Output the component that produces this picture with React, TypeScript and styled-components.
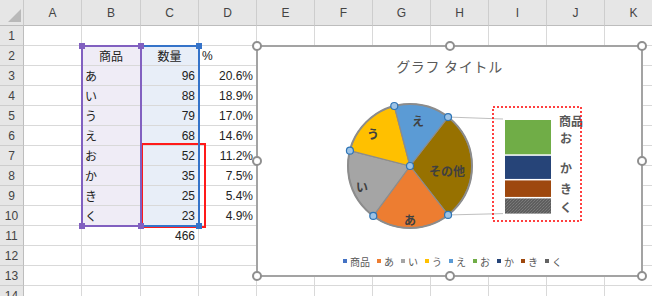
import styled, { createGlobalStyle } from 'styled-components';

const GlobalStyle = createGlobalStyle`
  *, *::before, *::after {
    box-sizing: border-box;
  }
  html, body {
    margin: 0;
    padding: 0;
    background: #ffffff;
    overflow: hidden;
  }
  body {
    font-family: "Liberation Sans", "Noto Sans CJK JP", sans-serif;
  }
`;

const COLS = ['A', 'B', 'C', 'D', 'E', 'F', 'G', 'H', 'I', 'J', 'K'];
const ROWS = 14;

const items = [
  { name: 'あ', qty: 96, color: '#ed7d31' },
  { name: 'い', qty: 88, color: '#a5a5a5' },
  { name: 'う', qty: 79, color: '#ffc000' },
  { name: 'え', qty: 68, color: '#5b9bd5' },
  { name: 'お', qty: 52, color: '#70ad47' },
  { name: 'か', qty: 35, color: '#264478' },
  { name: 'き', qty: 25, color: '#9e480e' },
  { name: 'く', qty: 23, color: '#636363' },
];
const total = items.reduce((s, i) => s + i.qty, 0);

type Align = 'left' | 'center' | 'right';
type CellData = { v: string; align?: Align };

// セルの中身
const cells: Record<string, CellData> = {
  B2: { v: '商品', align: 'center' },
  C2: { v: '数量', align: 'center' },
  D2: { v: '%' },
  C11: { v: String(total), align: 'right' },
};
items.forEach((it, i) => {
  const r = i + 3;
  cells['B' + r] = { v: it.name };
  cells['C' + r] = { v: String(it.qty), align: 'right' };
  cells['D' + r] = { v: ((it.qty / total) * 100).toFixed(1) + '%', align: 'right' };
});

const tintFor = (col: string, row: number) => {
  if (row < 2 || row > 10) return undefined;
  if (col === 'B') return '#efecf6';
  if (col === 'C') return '#e8eef8';
  return undefined;
};

const Sheet = styled.div`
  width: 652px;
  height: 296px;
  overflow: hidden;
  display: grid;
  grid-template-columns: 24px 58px 59px repeat(9, 58px);
  grid-template-rows: 26px repeat(14, 20px);
  font-size: 12px;
  color: #222;
`;

const Corner = styled.div`
  grid-column: 1;
  grid-row: 1;
  background: #e6e6e6;
  border-right: 1px solid #c9c9c9;
  border-bottom: 1px solid #bdbdbd;
  display: flex;
  align-items: flex-end;
  justify-content: flex-end;
  padding: 0 2px 3px 0;

  &::after {
    content: '';
    width: 0;
    height: 0;
    border-left: 13px solid transparent;
    border-bottom: 13px solid #b9b9b9;
  }
`;

const ColHead = styled.div<{ $c: number }>`
  grid-column: ${p => p.$c};
  grid-row: 1;
  background: #e6e6e6;
  border-right: 1px solid #cdcdcd;
  border-bottom: 1px solid #bdbdbd;
  display: flex;
  align-items: center;
  justify-content: center;
  color: #444;
  font-size: 12px;
`;

const RowHead = styled.div<{ $r: number }>`
  grid-column: 1;
  grid-row: ${p => p.$r};
  background: #e6e6e6;
  border-right: 1px solid #bdbdbd;
  border-bottom: 1px solid #cdcdcd;
  display: flex;
  align-items: center;
  justify-content: center;
  color: #444;
  font-size: 12px;
`;

const Cell = styled.div<{ $c: number; $r: number; $align: Align; $tint?: string }>`
  grid-column: ${p => p.$c};
  grid-row: ${p => p.$r};
  border-right: 1px solid #d9d9d9;
  border-bottom: 1px solid #d9d9d9;
  padding: 0 3px;
  display: flex;
  align-items: center;
  justify-content: ${p => (p.$align === 'right' ? 'flex-end' : p.$align === 'center' ? 'center' : 'flex-start')};
  background: ${p => p.$tint ?? 'transparent'};
  white-space: nowrap;
  color: #222;
`;

const Range = styled.div<{ $col: number; $rows: string; $color: string }>`
  grid-column: ${p => p.$col};
  grid-row: ${p => p.$rows};
  margin: -1px;
  border: 2px solid ${p => p.$color};
  position: relative;
  pointer-events: none;
`;

const RangeHandle = styled.span<{ $color: string; $x: 'l' | 'r'; $y: 't' | 'b' }>`
  position: absolute;
  width: 6px;
  height: 6px;
  background: ${p => p.$color};
  ${p => (p.$x === 'l' ? 'left: -4px;' : 'right: -4px;')}
  ${p => (p.$y === 't' ? 'top: -4px;' : 'bottom: -4px;')}
`;

const Marker = styled.div`
  grid-column: 4;
  grid-row: 8 / 12;
  margin: -3px -7px -2px 0;
  border: 2px solid #ff1a1a;
  pointer-events: none;
`;

const Chart = styled.div`
  grid-column: 6 / 13;
  grid-row: 3 / 16;
  align-self: start;
  justify-self: start;
  margin: -1px 0 0 -1px;
  width: 387px;
  height: 232px;
  border: 2px solid #a3a3a3;
  background: #ffffff;
  position: relative;
  display: flex;
  flex-direction: column;
`;

const HandleLayer = styled.div`
  position: absolute;
  inset: -1px;
  pointer-events: none;
`;

const ChartHandle = styled.span<{ $x: number; $y: number }>`
  position: absolute;
  left: calc(${p => p.$x}% - 5px);
  top: calc(${p => p.$y}% - 5px);
  width: 10px;
  height: 10px;
  border-radius: 50%;
  border: 2px solid #8f8f8f;
  background: #ffffff;
`;

const Title = styled.div`
  height: 34px;
  padding-top: 10px;
  line-height: 18px;
  text-align: center;
  font-family: "Noto Sans CJK JP", sans-serif;
  font-size: 14px;
  letter-spacing: 0.7px;
  color: #595959;
`;

const Plot = styled.svg`
  display: block;
  width: 383px;
  height: 168px;
`;

const SliceLabel = styled.text`
  font-family: "Noto Sans CJK JP", sans-serif;
  font-size: 12px;
  font-weight: 700;
  fill: #404040;
`;

const BarLabel = styled.text`
  font-family: "Noto Sans CJK JP", sans-serif;
  font-size: 12px;
  font-weight: 700;
  fill: #595959;
`;

const Legend = styled.div`
  margin-top: 2px;
  height: 20px;
  padding-left: 6px;
  display: flex;
  align-items: center;
  justify-content: center;
  gap: 7px;
  font-family: "Noto Sans CJK JP", sans-serif;
  font-size: 10px;
  color: #595959;
`;

const LegendItem = styled.span`
  display: flex;
  align-items: center;
  gap: 3px;
`;

const Swatch = styled.span<{ $color: string }>`
  width: 4px;
  height: 4px;
  background: ${p => p.$color};
`;

// 円グラフ（補助縦棒付き）
const CX = 152;
const CY = 119;
const R = 62;

const others = items.slice(4).reduce((s, i) => s + i.qty, 0);
const slices = [
  { name: 'その他', qty: others, color: '#977100', lx: 189, ly: 123 },
  { ...items[0], lx: 152, ly: 172 },
  { ...items[1], lx: 104, ly: 139 },
  { ...items[2], lx: 115, ly: 86 },
  { ...items[3], lx: 160, ly: 73 },
];

const pt = (deg: number) => {
  const a = (deg * Math.PI) / 180;
  return [CX + R * Math.sin(a), CY - R * Math.cos(a)];
};

let acc = 90 - (others / total) * 180;
const arcs = slices.map(s => {
  const start = acc;
  const end = acc + (s.qty / total) * 360;
  acc = end;
  const [x1, y1] = pt(start);
  const [x2, y2] = pt(end);
  return { ...s, start, d: `M${CX} ${CY} L${x1} ${y1} A${R} ${R} 0 0 1 ${x2} ${y2} Z` };
});

const BAR_X = 247;
const BAR_W = 46;
const BAR_TOP = 73;
const SCALE = 0.66;
const GAP = 1.5;
let by = BAR_TOP;
const bars = items.slice(4).map(it => {
  const h = it.qty * SCALE;
  const seg = { ...it, y: by, h };
  by += h + GAP;
  return seg;
});
const barBottom = by - GAP;

const legend = [{ name: '商品', color: '#4472c4' }, ...items];

function PieOfBar() {
  const top = pt(arcs[0].start);
  const bottom = pt(arcs[1].start);
  return (
    <Plot viewBox="0 34 383 168">
      <defs>
        <pattern id="grain" width="3" height="3" patternUnits="userSpaceOnUse">
          <rect width="3" height="3" fill="#5e5e5e" />
          <rect width="1" height="1" fill="#7d7d7d" />
          <rect x="2" y="1" width="1" height="1" fill="#777" />
          <rect x="1" y="2" width="1" height="1" fill="#727272" />
        </pattern>
      </defs>
      <line x1={top[0]} y1={top[1]} x2={BAR_X - 2} y2={BAR_TOP - 1} stroke="#bfbfbf" strokeWidth="1" />
      <line x1={bottom[0]} y1={bottom[1]} x2={BAR_X - 2} y2={barBottom} stroke="#bfbfbf" strokeWidth="1" />
      {arcs.map(a => (
        <path key={a.name} d={a.d} fill={a.color} stroke="#8c8c8c" strokeWidth="1.2" strokeLinejoin="round" />
      ))}
      <circle cx={CX} cy={CY} r={R} fill="none" stroke="#8c8c8c" strokeWidth="2" />
      {arcs.map(a => (
        <SliceLabel key={a.name + 'l'} x={a.lx} y={a.ly} textAnchor="middle" dominantBaseline="central">
          {a.name}
        </SliceLabel>
      ))}
      {[...arcs.map(a => pt(a.start)), [CX, CY]].map(([x, y], i) => (
        <circle key={i} cx={x} cy={y} r="3.5" fill="#9dc3e6" stroke="#2e75b6" strokeWidth="1.2" />
      ))}
      {bars.map(b => (
        <rect
          key={b.name}
          x={BAR_X}
          y={b.y}
          width={BAR_W}
          height={b.h}
          fill={b.name === 'く' ? 'url(#grain)' : b.color}
        />
      ))}
      <BarLabel x="301" y="73" dominantBaseline="central">商品</BarLabel>
      {bars.map(b => (
        <BarLabel key={b.name + 'l'} x="302" y={b.y + b.h / 2} dominantBaseline="central">
          {b.name}
        </BarLabel>
      ))}
      <rect x="235" y="60" width="88" height="114" fill="none" stroke="#ff0000" strokeWidth="1.5" strokeDasharray="2 2" />
    </Plot>
  );
}

export default function App() {
  const rowNums = Array.from({ length: ROWS }, (_, i) => i + 1);
  return (
    <>
      <GlobalStyle />
      <Sheet>
        <Corner />
        {COLS.map((c, ci) => (
          <ColHead key={c} $c={ci + 2}>{c}</ColHead>
        ))}
        {rowNums.map(r => [
          <RowHead key={'h' + r} $r={r + 1}>{r}</RowHead>,
          ...COLS.map((c, ci) => {
            const d = cells[c + r];
            return (
              <Cell key={c + r} $c={ci + 2} $r={r + 1} $align={d?.align ?? 'left'} $tint={tintFor(c, r)}>
                {d?.v}
              </Cell>
            );
          }),
        ])}

        <Range $col={4} $rows="3 / 12" $color="#3573c9">
          <RangeHandle $color="#3573c9" $x="r" $y="t" />
          <RangeHandle $color="#3573c9" $x="r" $y="b" />
        </Range>
        <Range $col={3} $rows="3 / 12" $color="#8160c0">
          <RangeHandle $color="#8160c0" $x="l" $y="t" />
          <RangeHandle $color="#8160c0" $x="r" $y="t" />
          <RangeHandle $color="#8160c0" $x="l" $y="b" />
          <RangeHandle $color="#8160c0" $x="r" $y="b" />
        </Range>
        <Marker />

        <Chart>
          <Title>グラフ タイトル</Title>
          <PieOfBar />
          <Legend>
            {legend.map(l => (
              <LegendItem key={l.name}>
                <Swatch $color={l.color} />
                {l.name}
              </LegendItem>
            ))}
          </Legend>
          <HandleLayer>
            {[
              [0, 0], [50, 0], [100, 0],
              [0, 50], [100, 50],
              [0, 100], [50, 100], [100, 100],
            ].map(([x, y]) => (
              <ChartHandle key={x + '-' + y} $x={x} $y={y} />
            ))}
          </HandleLayer>
        </Chart>
      </Sheet>
    </>
  );
}
